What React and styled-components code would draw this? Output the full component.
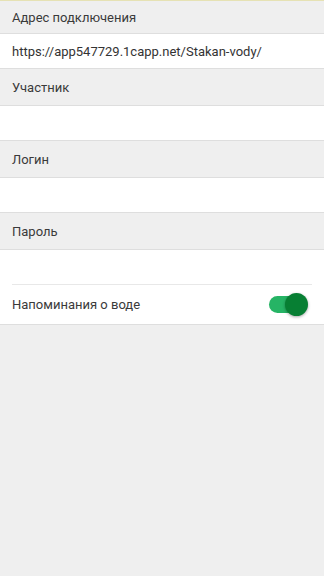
import React, { useState } from "react";
import styled, { createGlobalStyle } from "styled-components";

const GlobalStyle = createGlobalStyle`
  html, body {
    margin: 0;
    padding: 0;
    background: #efefef;
    font-family: Roboto, "Noto Sans", "Liberation Sans", sans-serif;
  }
`;

const Screen = styled.div`
  width: 324px;
  min-height: 576px;
  background: #efefef;
  border-top: 1px solid #e6e2b4;
  box-sizing: border-box;
`;

const SectionHeader = styled.div`
  height: ${({ $first }) => ($first ? "32px" : "36px")};
  display: flex;
  align-items: center;
  padding: 0 12px;
  background: #efefef;
  border-bottom: 1px solid #dedede;
  color: #3a3a3a;
  font-size: 13px;
`;

const Field = styled.div`
  height: 34px;
  display: flex;
  align-items: center;
  padding: 0 12px;
  background: #fff;
  border-bottom: ${({ $noBorder }) => ($noBorder ? "none" : "1px solid #dedede")};
  color: #333;
  font-size: 13px;
`;

const Card = styled.div`
  background: #fff;
  border-bottom: 1px solid #dedede;
`;

const Divider = styled.div`
  height: 1px;
  margin: 0 12px;
  background: #e8e8e8;
`;

const ToggleRow = styled.div`
  height: 39px;
  display: flex;
  align-items: center;
  justify-content: space-between;
  padding: 0 17px 0 12px;
  color: #3a3a3a;
  font-size: 13px;
`;

const Track = styled.button`
  position: relative;
  width: 38px;
  height: 17px;
  border: none;
  padding: 0;
  border-radius: 9px;
  background: ${({ $on }) => ($on ? "#26b465" : "#bdbdbd")};
  cursor: pointer;
`;

const Thumb = styled.span`
  position: absolute;
  top: -3px;
  left: ${({ $on }) => ($on ? "16px" : "-2px")};
  width: 23px;
  height: 23px;
  border-radius: 50%;
  background: ${({ $on }) => ($on ? "#077f33" : "#f5f5f5")};
  box-shadow: 0 1px 3px rgba(0, 0, 0, 0.35);
`;

const sections = [
  { label: "Адрес подключения", value: "https://app547729.1capp.net/Stakan-vody/" },
  { label: "Участник", value: "" },
  { label: "Логин", value: "" },
];

export default function App() {
  const [reminders, setReminders] = useState(true);

  return (
    <>
      <GlobalStyle />
      <Screen>
        {sections.map((s, i) => (
          <React.Fragment key={s.label}>
            <SectionHeader $first={i === 0}>{s.label}</SectionHeader>
            <Field>{s.value}</Field>
          </React.Fragment>
        ))}
        <SectionHeader>Пароль</SectionHeader>
        <Card>
          <Field $noBorder />
          <Divider />
          <ToggleRow>
            Напоминания о воде
            <Track $on={reminders} onClick={() => setReminders(!reminders)}>
              <Thumb $on={reminders} />
            </Track>
          </ToggleRow>
        </Card>
      </Screen>
    </>
  );
}
